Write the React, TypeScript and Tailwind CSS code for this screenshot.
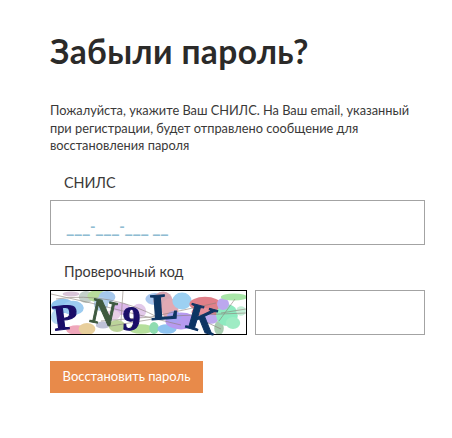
const blobs: [number, number, number, number, string][] = [
  [12, 15, 10, 6, "#8fc4ee"],
  [22, 17, 9, 6, "#9ccbf0"],
  [6, 26, 5, 6, "#b4d8f2"],
  [26, 39, 9, 4, "#efa6ba"],
  [36, 38, 7, 5, "#e8cf9c"],
  [35, 6, 6, 5, "#c4d0ca"],
  [46, 5, 8, 5, "#b8dc9c"],
  [56, 6, 7, 5, "#a6c8ec"],
  [50, 13, 6, 6, "#b3cfe8"],
  [20, 3, 7, 2, "#d8c4d8"],
  [70, 18, 8, 5, "#dcb8ea"],
  [62, 24, 6, 4, "#e8cfe6"],
  [52, 34, 6, 3, "#bfc2d8"],
  [66, 35, 7, 5, "#bcd39a"],
  [90, 38, 10, 4, "#b6df9c"],
  [88, 20, 6, 6, "#e2c9ea"],
  [104, 8, 8, 5, "#a9c7ef"],
  [112, 10, 8, 8, "#d8a8b4"],
  [119, 18, 7, 9, "#e2aab4"],
  [103, 37, 4, 5, "#8fdcb0"],
  [116, 38, 8, 4, "#8ec3f0"],
  [131, 10, 8, 7, "#9cd0f2"],
  [130, 30, 13, 7, "#b79af0"],
  [123, 26, 6, 5, "#a9a2f2"],
  [154, 13, 13, 6, "#e07f88"],
  [150, 21, 8, 4, "#e6909a"],
  [163, 20, 5, 4, "#d9848c"],
  [160, 28, 6, 4, "#bca8ee"],
  [168, 37, 4, 6, "#a8ccb0"],
  [176, 24, 9, 9, "#8eeac0"],
  [182, 32, 6, 5, "#9eecc4"],
  [172, 13, 5, 5, "#bca8ee"],
  [183, 6, 11, 3, "#a8e6a8"],
  [190, 20, 4, 4, "#c6f0d8"],
];

function Captcha() {
  return (
    <svg viewBox="0 0 195 43" className="block h-full w-full overflow-visible bg-white">
      <defs>
        <filter id="soft">
          <feGaussianBlur stdDeviation="0.5" />
        </filter>
        <clipPath id="box">
          <rect x="0" y="0" width="195" height="43" />
        </clipPath>
      </defs>
      <g clipPath="url(#box)">
        <g filter="url(#soft)">
          {blobs.map(([cx, cy, rx, ry, fill], i) => (
            <ellipse key={i} cx={cx} cy={cy} rx={rx * 1.2} ry={ry * 1.2} fill={fill} />
          ))}
          <g stroke="#8a7f78" strokeWidth="0.8" fill="none" opacity="0.75">
            <path d="M0 3 L40 12 L80 22 L130 34" />
            <path d="M5 8 Q60 0 110 28" />
            <path d="M50 30 L100 26 L165 12" />
            <path d="M60 35 L120 25 L195 22" />
            <path d="M72 0 L70 30" />
            <path d="M140 24 L170 38" />
            <path d="M170 22 L195 18" />
            <path d="M168 30 L184 8" />
          </g>
        </g>
      </g>
      <g filter="url(#soft)" fontFamily="'Liberation Serif', serif" fontWeight="700" textAnchor="middle" strokeWidth="1">
        <text transform="translate(16 38) rotate(-7) scale(1.12 1)" fontSize="36" fill="#1a1068" stroke="#1a1068">P</text>
        <text transform="translate(50 33) rotate(12) scale(0.95 1)" fontSize="36" fill="#3f5a40" stroke="#3f5a40">N</text>
        <text transform="translate(80 39) rotate(3) scale(1.05 1)" fontSize="34" fill="#1a1068" stroke="#1a1068">9</text>
        <text transform="translate(114 28) rotate(-4) scale(1.1 1)" fontSize="37" fill="#0f3564" stroke="#0f3564">L</text>
        <text transform="translate(148 40) rotate(16)" fontSize="38" fill="#0f3564" stroke="#0f3564">K</text>
      </g>
    </svg>
  );
}

function Dash() {
  return <span className="align-[9px] text-[15px]">-</span>;
}

export default function App() {
  return (
    <div className="min-h-[438px] bg-white pl-[50px] pr-[27px] pt-[29px] font-['Lato','Noto_Sans',sans-serif] text-[#2b2a29]">
      <h1 className="text-[33.5px] font-bold leading-[44px] tracking-[0.4px]">Забыли пароль?</h1>
      <p className="mt-[29px] w-[375px] text-[12.8px] leading-[17.5px] text-[#3a3938]">
        Пожалуйста, укажите Ваш СНИЛС. На Ваш email, указанный при регистрации, будет отправлено сообщение для восстановления пароля
      </p>
      <label className="mt-[18px] block pl-[14px] text-[14.4px] leading-[20px] text-[#3a3938]">СНИЛС</label>
      <div className="mt-[7px] flex h-[45px] w-[375px] items-center whitespace-pre border border-[#a3a3a3] pl-[15px] pt-[9px] text-[18px] font-bold tracking-[-0.4px] text-[#8fbcd2]">
        ___<Dash />___<Dash />___ __
      </div>
      <label className="mt-[17px] block pl-[14px] text-[14.4px] leading-[20px] text-[#3a3938]">Проверочный код</label>
      <div className="mt-[8px] flex w-[375px] gap-[8px]">
        <div className="h-[45px] w-[197px] border border-black">
          <Captcha />
        </div>
        <input className="h-[45px] min-w-0 flex-1 border border-[#a3a3a3] bg-white" />
      </div>
      <button className="mt-[26px] block h-[32px] w-[153px] bg-[#e88a4a] text-[13px] text-white">Восстановить пароль</button>
    </div>
  );
}
